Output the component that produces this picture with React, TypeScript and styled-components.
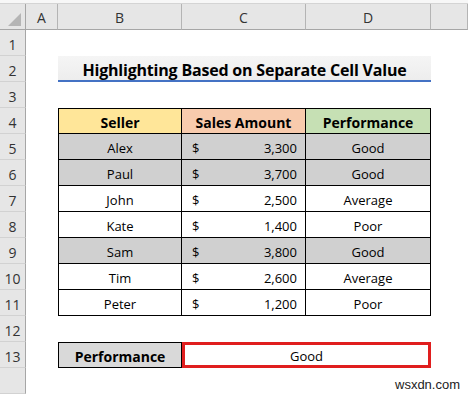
import styled, { createGlobalStyle } from 'styled-components';

const GlobalStyle = createGlobalStyle`
    html, body {
        margin: 0;
        padding: 0;
        background: #ffffff;
        overflow: hidden;
    }
    body {
        font-family: "Open Sans", "Liberation Sans", sans-serif;
    }
`;

const Page = styled.div`
    position: relative;
    width: 468px;
    height: 394px;
    overflow: hidden;
    background: #ffffff;
`;

const TopStrip = styled.div`
    height: 3px;
    background: #f7f7f7;
    border-bottom: 1px solid #d4d4d4;
`;

// the whole sheet is one grid: row-number column, A, B, C, D, E
const Sheet = styled.div`
    display: grid;
    grid-template-columns: 26px 32px 124px 124px 125px 1fr;
    grid-auto-rows: 26px;
    color: #000;
    font-size: 13px;
`;

const Corner = styled.div`
    background: #e6e6e6;
    border-right: 1px solid #a6a6a6;
    border-bottom: 1px solid #a6a6a6;
    box-sizing: border-box;
    display: flex;
    align-items: flex-end;
    justify-content: flex-end;
    padding: 0 4px 3px 0;
`;

const ColHead = styled.div`
    background: #e6e6e6;
    border-right: 1px solid #b4b4b4;
    border-bottom: 1px solid #a6a6a6;
    box-sizing: border-box;
    display: flex;
    align-items: center;
    justify-content: center;
    color: #333;
    font-size: 14px;
    padding-top: 2px;
`;

const RowHead = styled.div`
    background: #e6e6e6;
    border-right: 1px solid #a6a6a6;
    border-bottom: 1px solid #d2d2d2;
    box-sizing: border-box;
    display: flex;
    align-items: center;
    justify-content: center;
    color: #333;
    font-size: 14px;
    padding-top: 3px;
`;

const Blank = styled.div<{ $span?: number }>`
    grid-column: span ${(p) => p.$span ?? 1};
`;

const Title = styled.div`
    grid-column: span 3;
    background: linear-gradient(to bottom, #f5f5f5, #ededed);
    border-bottom: 2px solid #4472c4;
    box-sizing: border-box;
    display: flex;
    align-items: center;
    justify-content: center;
    font-weight: 700;
    font-size: 16px;
    letter-spacing: -0.2px;
    padding-top: 3px;
`;

const Cell = styled.div<{ $bg?: string; $bold?: boolean; $top?: boolean; $left?: boolean }>`
    background: ${(p) => p.$bg ?? '#ffffff'};
    border-right: 1px solid #000;
    border-bottom: 1px solid #000;
    border-top: ${(p) => (p.$top ? '1px solid #000' : 'none')};
    border-left: ${(p) => (p.$left ? '1px solid #000' : 'none')};
    box-sizing: border-box;
    display: flex;
    align-items: center;
    justify-content: center;
    font-weight: ${(p) => (p.$bold ? 700 : 400)};
    font-size: ${(p) => (p.$bold ? '14px' : '13px')};
    padding-top: 2px;
`;

const MoneyCell = styled(Cell)`
    justify-content: space-between;
    padding: 2px 8px 0 10px;
`;

const ResultBox = styled.div`
    grid-column: span 2;
    border: 3px solid #e01e1e;
    box-sizing: border-box;
    display: flex;
    align-items: center;
    justify-content: center;
    font-size: 13px;
    padding-top: 1px;
`;

const Watermark = styled.div`
    position: absolute;
    left: 395px;
    top: 377px;
    font-family: "Liberation Sans", Arial, sans-serif;
    font-size: 13px;
    color: #222;
`;

type Row = { seller: string; amount: string; perf: string };

const rows: Row[] = [
    { seller: 'Alex', amount: '3,300', perf: 'Good' },
    { seller: 'Paul', amount: '3,700', perf: 'Good' },
    { seller: 'John', amount: '2,500', perf: 'Average' },
    { seller: 'Kate', amount: '1,400', perf: 'Poor' },
    { seller: 'Sam', amount: '3,800', perf: 'Good' },
    { seller: 'Tim', amount: '2,600', perf: 'Average' },
    { seller: 'Peter', amount: '1,200', perf: 'Poor' },
];

const GREY = '#d0d0d0';

function App() {
    return (
        <Page>
            <GlobalStyle />
            <TopStrip />
            <Sheet>
                {/* column headers */}
                <Corner>
                    <svg width="13" height="13" viewBox="0 0 13 13">
                        <polygon points="13,0 13,13 0,13" fill="#b5b5b5" />
                    </svg>
                </Corner>
                {['A', 'B', 'C', 'D', ''].map((c, i) => (
                    <ColHead key={i}>{c}</ColHead>
                ))}

                {/* row 1 */}
                <RowHead>1</RowHead>
                <Blank $span={5} />

                {/* row 2 title */}
                <RowHead>2</RowHead>
                <Blank />
                <Title>Highlighting Based on Separate Cell Value</Title>
                <Blank />

                {/* row 3 */}
                <RowHead>3</RowHead>
                <Blank $span={5} />

                {/* row 4 table header */}
                <RowHead>4</RowHead>
                <Blank />
                <Cell $bg="#ffe699" $bold $top $left>Seller</Cell>
                <Cell $bg="#f8cbad" $bold $top>Sales Amount</Cell>
                <Cell $bg="#c6e0b4" $bold $top>Performance</Cell>
                <Blank />

                {rows.map((r, i) => {
                    const bg = r.perf === 'Good' ? GREY : '#ffffff';
                    return [
                        <RowHead key={`h${i}`}>{i + 5}</RowHead>,
                        <Blank key={`a${i}`} />,
                        <Cell key={`b${i}`} $bg={bg} $left>{r.seller}</Cell>,
                        <MoneyCell key={`c${i}`} $bg={bg}>
                            <span>$</span>
                            <span>{r.amount}</span>
                        </MoneyCell>,
                        <Cell key={`d${i}`} $bg={bg}>{r.perf}</Cell>,
                        <Blank key={`e${i}`} />,
                    ];
                })}

                {/* row 12 */}
                <RowHead>12</RowHead>
                <Blank $span={5} />

                {/* row 13 lookup */}
                <RowHead>13</RowHead>
                <Blank />
                <Cell $bg="#d9d9d9" $bold $top $left>Performance</Cell>
                <ResultBox>Good</ResultBox>
                <Blank />

                {/* row 14 */}
                <RowHead />
                <Blank $span={5} />
            </Sheet>
            <Watermark>wsxdn.com</Watermark>
        </Page>
    );
}

export default App;
